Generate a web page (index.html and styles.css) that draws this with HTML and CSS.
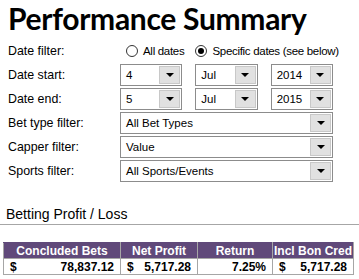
FILE: index.html
```html
<!DOCTYPE html>
<html lang="en">
<head>
    <meta charset="UTF-8">
    <title>Performance Summary</title>
    <link rel="stylesheet" href="styles.css">
</head>
<body>
    <h1 class="title">Performance Summary</h1>

    <div class="filters">
        <div class="label">Date filter:</div>
        <div class="radios">
            <span class="radio"><span class="dot"></span>All dates</span>
            <span class="radio checked"><span class="dot"></span>Specific dates (see below)</span>
        </div>

        <div class="label">Date start:</div>
        <div class="dates">
            <div class="combo"><span class="value">4</span><span class="arrow"></span></div>
            <div class="combo"><span class="value">Jul</span><span class="arrow"></span></div>
            <div class="combo"><span class="value">2014</span><span class="arrow"></span></div>
        </div>

        <div class="label">Date end:</div>
        <div class="dates">
            <div class="combo"><span class="value">5</span><span class="arrow"></span></div>
            <div class="combo"><span class="value">Jul</span><span class="arrow"></span></div>
            <div class="combo"><span class="value">2015</span><span class="arrow"></span></div>
        </div>

        <div class="label">Bet type filter:</div>
        <div class="combo wide"><span class="value">All Bet Types</span><span class="arrow"></span></div>

        <div class="label">Capper filter:</div>
        <div class="combo wide"><span class="value">Value</span><span class="arrow"></span></div>

        <div class="label">Sports filter:</div>
        <div class="combo wide"><span class="value">All Sports/Events</span><span class="arrow"></span></div>
    </div>

    <h2 class="section">Betting Profit / Loss</h2>

    <table class="summary">
        <tr>
            <th class="c1">Concluded Bets</th>
            <th class="c2">Net Profit</th>
            <th class="c3">Return</th>
            <th class="c4">Incl Bon Cred</th>
        </tr>
        <tr>
            <td><span class="cur">$</span>78,837.12</td>
            <td><span class="cur">$</span>5,717.28</td>
            <td>7.25%</td>
            <td><span class="cur">$</span>5,717.28</td>
        </tr>
    </table>
</body>
</html>
```

FILE: styles.css
```css
* {
    margin: 0;
    padding: 0;
    box-sizing: border-box;
}

body {
    font-family: "Liberation Sans", Arial, sans-serif;
    font-size: 13px;
    color: #000;
    background: #fff;
    width: 359px;
    height: 279px;
    overflow: hidden;
}

/* Title */
.title {
    font-family: "Lato", "DejaVu Sans", sans-serif;
    font-weight: bold;
    font-size: 30px;
    line-height: 34px;
    padding: 1px 0 0 8px;
    height: 40px;
    letter-spacing: -0.3px;
}

/* Filter form */
.filters {
    display: grid;
    grid-template-columns: 112px 213px;
    grid-auto-rows: 22px;
    row-gap: 2px;
    padding-left: 8px;
    align-items: center;
}

.label {
    font-size: 12.4px;
}

.radios {
    display: flex;
    gap: 11px;
    padding-left: 6px;
    font-size: 11.5px;
    letter-spacing: -0.3px;
    white-space: nowrap;
}

.radio {
    display: flex;
    align-items: center;
    gap: 5px;
}

.radio .dot {
    width: 12px;
    height: 12px;
    border: 1px solid #333;
    border-radius: 50%;
    background: #fff;
    position: relative;
}

.radio.checked .dot::after {
    content: "";
    position: absolute;
    left: 2px;
    top: 2px;
    width: 6px;
    height: 6px;
    border-radius: 50%;
    background: #000;
}

.dates {
    display: flex;
    gap: 13px;
}

.combo {
    display: flex;
    width: 63px;
    height: 22px;
    border: 1px solid #8c8c8c;
    background: #fff;
}

.combo.wide {
    width: 213px;
}

.combo .value {
    flex: 1;
    padding-left: 5px;
    font-size: 11.5px;
    line-height: 20px;
    white-space: nowrap;
}

.combo .arrow {
    width: 21px;
    margin: 1px;
    background: #e1e1e1;
    border: 1px solid #c8c8c8;
    display: flex;
    align-items: center;
    justify-content: center;
}

.combo .arrow::after {
    content: "";
    border-left: 4px solid transparent;
    border-right: 4px solid transparent;
    border-top: 4px solid #000;
}

/* Profit / loss table */
.section {
    font-size: 14px;
    font-weight: normal;
    margin-top: 24px;
    padding: 0 0 2px 6px;
    line-height: 16px;
    border-bottom: 1px solid #a6a6a6;
}

.summary {
    margin: 17px 0 0 3px;
    border-collapse: collapse;
    font-size: 12px;
}

.summary th {
    background: #60497a;
    color: #fff;
    font-weight: bold;
    height: 16px;
    line-height: 14px;
    padding: 0;
    border: 1px solid #a6a6a6;
    border-top-color: #60497a;
}

.summary td {
    height: 16px;
    line-height: 14px;
    padding: 0 6px;
    text-align: right;
    font-weight: bold;
    border: 1px solid #a6a6a6;
}

.summary .cur {
    float: left;
}

.c1 { width: 117px; }
.c2 { width: 77px; }
.c3 { width: 75px; }
.c4 { width: 81px; }
```
